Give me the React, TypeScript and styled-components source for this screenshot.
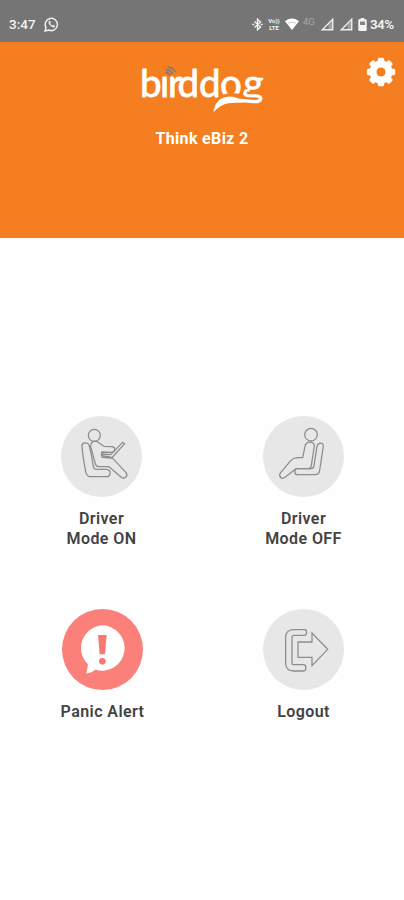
import React from "react";
import styled, { createGlobalStyle } from "styled-components";

const GlobalStyle = createGlobalStyle`
  * { box-sizing: border-box; }
  body { margin: 0; background: #fff; font-family: Roboto, "Liberation Sans", sans-serif; }
`;

const Screen = styled.div`
  width: 404px;
  height: 900px;
  display: flex;
  flex-direction: column;
  background: #fefefe;
  overflow: hidden;
`;

const StatusBar = styled.div`
  height: 42px;
  flex: none;
  display: flex;
  align-items: center;
  justify-content: space-between;
  padding: 6px 9px 0 9px;
  background: #757575;
  color: #f4f4f4;
  font-size: 13.5px;
  font-weight: 500;
`;

const StatusGroup = styled.div<{ $gap: number }>`
  display: flex;
  align-items: center;
  gap: ${(p) => p.$gap}px;
  svg { display: block; flex: none; }
`;

const Lte = styled.div`
  width: 14px;
  display: flex;
  flex-direction: column;
  font-size: 6px;
  line-height: 7px;
  font-weight: 700;
  text-align: center;
`;

const Network = styled.div`
  width: 13px;
  margin-top: -5px;
  font-size: 9.5px;
  line-height: 12px;
  font-weight: 400;
  color: #a8a8a8;
`;

const Battery = styled.div`
  width: 25px;
  margin-left: -2px;
  font-size: 13.5px;
  letter-spacing: -0.6px;
  font-weight: 600;
`;

const Header = styled.header`
  height: 196px;
  flex: none;
  display: grid;
  grid-template-columns: 60px 1fr 60px;
  background: #f57f20;
  color: #fff;
`;

const Brand = styled.div`
  grid-column: 2;
  display: flex;
  flex-direction: column;
  align-items: center;
  padding-top: 18px;
`;

const Account = styled.div`
  margin-top: 15px;
  font-size: 16px;
  line-height: 20px;
  font-weight: 700;
  letter-spacing: 0.35px;
`;

const Settings = styled.button`
  justify-self: end;
  align-self: start;
  margin: 15px 8px 0 0;
  width: 30px;
  height: 30px;
  padding: 0;
  border: 0;
  background: none;
  color: #fff;
  svg { display: block; }
`;

const Actions = styled.main`
  padding-top: 178px;
  display: grid;
  grid-template-columns: 202px 202px;
  grid-template-rows: 193px 193px;
`;

const Action = styled.button<{ $alert?: boolean }>`
  display: flex;
  flex-direction: column;
  align-items: center;
  padding: 0 0 0 ${(p) => (p.$alert ? 3 : 1)}px;
  border: 0;
  background: none;
  font-family: inherit;
  color: #434343;
`;

const Disc = styled.span<{ $alert?: boolean }>`
  width: 81px;
  height: 81px;
  flex: none;
  border-radius: 50%;
  background: ${(p) => (p.$alert ? "#fb8079" : "#e7e7e7")};
  svg { display: block; width: 81px; height: 81px; }
`;

const Label = styled.span`
  margin-top: 12px;
  width: 100px;
  font-size: 16px;
  line-height: 20px;
  font-weight: 600;
  letter-spacing: 0.42px;
`;

const Outline = styled.g`
  fill: none;
  stroke: #8d8d8d;
  stroke-width: 3.8;
  stroke-linejoin: round;
  stroke-linecap: round;
`;

const LogoSvg = styled.svg`
  display: block;
  overflow: visible;
`;

const WhatsApp = () => (
  <svg width="15" height="15" viewBox="0 0 15 15" fill="none" stroke="#f0f0f0">
    <path d="M1 14l1-3.500A6.100 6.100 0 1 1 4.700 13z" strokeWidth="1.500" />
    <path d="M5 4.200c-.8 1 .1 3 1.400 4.300s3.200 2.300 4.200 1.400l.1-1-1.600-.9-.8.700C7 8.200 6.400 7.400 6.100 6.600l.6-.7-.7-1.700z" fill="#f0f0f0" strokeWidth=".4" />
  </svg>
);

const Bluetooth = () => (
  <svg width="11" height="13" viewBox="0 0 11 13" fill="none" stroke="#f0f0f0" strokeWidth="1.400">
    <path d="M2.500 3.500l6 5.500-3 2.800V1.200l3 2.800-6 5.500" />
    <path d="M0.300 6.500h2M8.700 6.500h2" strokeWidth="1.600" />
  </svg>
);

const Wifi = () => (
  <svg width="14" height="12" viewBox="0 0 14 12">
    <path d="M7 12L0 3.300C3.600-.6 10.400-.6 14 3.300z" fill="#fff" />
    <path d="M3.300 5.200Q7 2.700 10.700 5.200" fill="none" stroke="#aaa" strokeWidth="0.700" />
  </svg>
);

const Signal = () => (
  <svg width="13" height="13" viewBox="0 0 13 13">
    <path d="M1.300 11.800L11.700 1.300v10.500z" fill="none" stroke="#eee" strokeWidth="1.400" />
    <path d="M7.500 12V6.500L12 2v10z" fill="#eee" opacity=".35" />
  </svg>
);

const BatteryIcon = () => (
  <svg width="9" height="13" viewBox="0 0 9 13">
    <path d="M2.700 0h3.600v1.300H8a.7.7 0 0 1 .7.7v10a.9.9 0 0 1-.9.9H1.200a.9.9 0 0 1-.9-.9V2a.7.7 0 0 1 .7-.7h1.700z" fill="#f4f4f4" />
    <path d="M2 3.500h5V7H2z" fill="#858585" />
  </svg>
);

const Logo = () => (
  <LogoSvg width="126" height="54" viewBox="139 60 126 54">
    <text
      x="140 160 168 177.500 199 220 243.500"
      y="96.500"
      fontFamily="Lato, sans-serif"
      fontSize="38.500"
      fill="#fff"
      stroke="#fff"
      strokeWidth="0.800"
      strokeLinejoin="round"
    >
      birddog
    </text>
    <path d="M159.500 64h10.500v11h-10.500z" fill="#f57f20" />
    <g fill="none" stroke="#92796d" strokeWidth="1.900">
      <path d="M165 72.500q3.500 0 5 3" />
      <path d="M166 69.700q4.500 0 6.500 4.500" />
      <path d="M167.500 67q6 .5 8 5.500" />
    </g>
    <path d="M213 113c1-11 7-18 14-19.500 8-1.500 11 1 16 1l0-3h23V110h-23z" fill="#f57f20" />
    <path d="M246.500 90q-4 5 1.500 5.700l8 .2c7 .3 6 5.800-1 5.800-6 .3-12-1.500-19-1.600" stroke="#fff" strokeWidth="3.300" fill="none" />
    <path d="M213.500 112.500c1-9 5-14.800 14.500-15.800 8-.7 11 3.300 18 5.300-9 1.500-16 0-22 2.500-5 2-7.500 4.500-10.500 8z" fill="#fff" />
  </LogoSvg>
);

const Gear = () => (
  <svg width="30" height="30" viewBox="0 0 30 30">
    <g fill="#fff" transform="translate(15 15)">
      {[0, 45, 90, 135].map((a) => (
        <rect key={a} x="-3.200" y="-14.200" width="6.400" height="28.400" rx="1.600" transform={`rotate(${a})`} />
      ))}
      <circle r="11.500" />
      <circle r="4.500" fill="#f57f20" />
    </g>
  </svg>
);

const DriverOn = () => (
  <svg viewBox="33 32 243 243">
    <Outline>
      <circle cx="133" cy="90" r="18" />
      <path d="M130 184C127 164 123 139 117 119c-4-10-21-8-21 2 1 24 6 50 11 78 2 9 6 15 14 15h49c13 0 14-21 0-22h-31q-7 0-9-8z" />
      <path d="M122 123c-1-13 9-18 20-14l20 14 24 1c12 1 10 16 0 17l-31-1 4 12 18 2q8 1 14 8l37 40c8 9-5 22-15 13l-36-31h-30q-10 0-12-12z" />
      <path d="M154 146l28 2 36-37 6 4-39 43-29-2z" />
    </Outline>
  </svg>
);

const DriverOff = () => (
  <svg viewBox="35 32 243 243">
    <Outline>
      <circle cx="179" cy="88" r="19" />
      <path d="M188 180l9-57c3-14 20-12 19-1l-11 73q-2 13-14 13h-53c-10 0-10-18 0-18h39q10 0 11-10z" />
      <path d="M161 123c2-17 28-17 28-1l-9 58q-1 10-10 10h-36l-33 26c-11 8-21-4-13-14l30-36q8-8 19-9h17z" />
    </Outline>
  </svg>
);

const Alert = () => (
  <svg viewBox="37 27 243 243">
    <path d="M157 76a68 68 0 1 1-20 133q-10 9-27 12l5-28A68 68 0 0 1 157 76z" fill="#fff" />
    <path d="M145 105h26l-5 58h-16z" fill="#f87970" />
    <circle cx="158" cy="184" r="10" fill="#f87970" />
  </svg>
);

const Exit = () => (
  <svg viewBox="33 28 243 243">
    <Outline>
      <path d="M123 90h34c9 0 9 17 0 17h-31q-6 0-6 6v76q0 6 6 6h29c9 0 9 19 0 19h-30q-23-1-24-22v-80q1-21 22-22z" />
      <path d="M138 127h42v-27l47 49-47 49v-25h-42z" strokeLinejoin="miter" />
    </Outline>
  </svg>
);

const actions = [
  { icon: <DriverOn />, lines: ["Driver", "Mode ON"], alert: false },
  { icon: <DriverOff />, lines: ["Driver", "Mode OFF"], alert: false },
  { icon: <Alert />, lines: ["Panic Alert"], alert: true },
  { icon: <Exit />, lines: ["Logout"], alert: false },
];

export default function App() {
  return (
    <Screen>
      <GlobalStyle />
      <StatusBar>
        <StatusGroup $gap={8}>
          <span>3:47</span>
          <WhatsApp />
        </StatusGroup>
        <StatusGroup $gap={5}>
          <StatusGroup $gap={4}>
            <Bluetooth />
            <Lte>
              <span>Vo))</span>
              <span>LTE</span>
            </Lte>
            <Wifi />
            <Network>4G</Network>
          </StatusGroup>
          <StatusGroup $gap={5.500}>
            <Signal />
            <Signal />
            <BatteryIcon />
          </StatusGroup>
          <Battery>34%</Battery>
        </StatusGroup>
      </StatusBar>
      <Header>
        <Brand>
          <Logo />
          <Account>Think eBiz 2</Account>
        </Brand>
        <Settings aria-label="Settings"><Gear /></Settings>
      </Header>
      <Actions>
        {actions.map((a) => (
          <Action key={a.lines.join(" ")} $alert={a.alert}>
            <Disc $alert={a.alert}>{a.icon}</Disc>
            <Label>
              {a.lines.map((l, i) => (
                <React.Fragment key={l}>{i > 0 && <br />}{l}</React.Fragment>
              ))}
            </Label>
          </Action>
        ))}
      </Actions>
    </Screen>
  );
}
